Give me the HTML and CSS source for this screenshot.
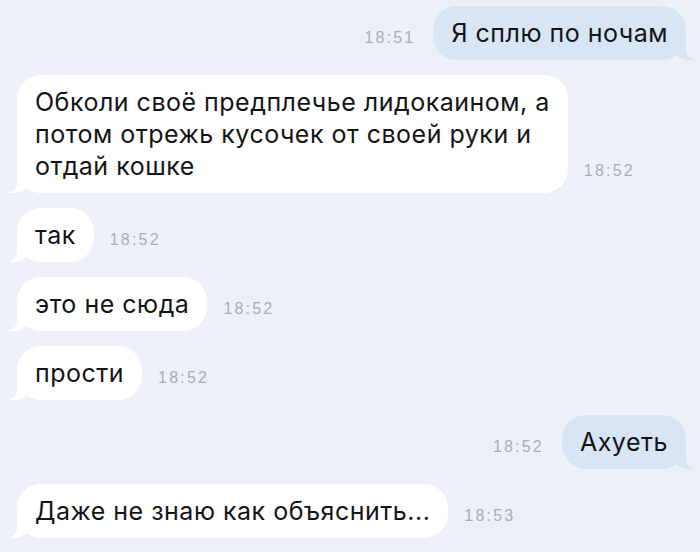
FILE: index.html
```html
<!DOCTYPE html>
<html lang="ru">
<head>
<meta charset="utf-8">
<link rel="stylesheet" href="styles.css">
</head>
<body>
<div class="chat">
  <div class="row out">
    <span class="time">18:51</span>
    <div class="bubble">Я сплю по ночам</div>
  </div>
  <div class="row in">
    <div class="bubble">Обколи своё предплечье лидокаином, а<br>потом отрежь кусочек от своей руки и<br>отдай кошке</div>
    <span class="time">18:52</span>
  </div>
  <div class="row in">
    <div class="bubble">так</div>
    <span class="time">18:52</span>
  </div>
  <div class="row in">
    <div class="bubble">это не сюда</div>
    <span class="time">18:52</span>
  </div>
  <div class="row in">
    <div class="bubble">прости</div>
    <span class="time">18:52</span>
  </div>
  <div class="row out">
    <span class="time">18:52</span>
    <div class="bubble">Ахуеть</div>
  </div>
  <div class="row in">
    <div class="bubble">Даже не знаю как объяснить...</div>
    <span class="time">18:53</span>
  </div>
</div>
</body>
</html>
```
FILE: styles.css
```css
html, body {
  margin: 0;
  padding: 0;
  background: #edf1f7;
}
body {
  width: 700px;
  height: 552px;
  overflow: hidden;
  font-family: "Inter", "Liberation Sans", Arial, sans-serif;
  color: #141416;
}
.chat {
  display: flex;
  flex-direction: column;
  gap: 15px;
  padding: 6px 14px 0 17px;
}
.row {
  display: flex;
  align-items: flex-end;
  gap: 16px;
}
.row.out {
  justify-content: flex-end;
  gap: 18px;
}
.bubble {
  position: relative;
  font-size: 25px;
  letter-spacing: 0.5px;
  line-height: 32px;
  padding: 11px 18px;
  border-radius: 24px;
  background: #ffffff;
}
.in .bubble::before {
  content: "";
  position: absolute;
  bottom: 0;
  left: -7px;
  width: 20px;
  height: 22px;
  background: #ffffff;
  border-bottom-right-radius: 16px 14px;
}
.in .bubble::after {
  content: "";
  position: absolute;
  bottom: 0;
  left: -26px;
  width: 26px;
  height: 22px;
  background: #edf1f7;
  border-bottom-right-radius: 10px;
}
.out .bubble {
  background: #d8e5f5;
}
.out .bubble::before {
  content: "";
  position: absolute;
  bottom: 0;
  right: -7px;
  width: 20px;
  height: 22px;
  background: #d8e5f5;
  border-bottom-left-radius: 16px 14px;
}
.out .bubble::after {
  content: "";
  position: absolute;
  bottom: 0;
  right: -26px;
  width: 26px;
  height: 22px;
  background: #edf1f7;
  border-bottom-left-radius: 10px;
}
.time {
  font-family: "Liberation Sans", Arial, sans-serif;
  font-size: 16px;
  line-height: 16px;
  letter-spacing: 2.2px;
  color: #a7adb7;
  margin-bottom: 14px;
}
```
